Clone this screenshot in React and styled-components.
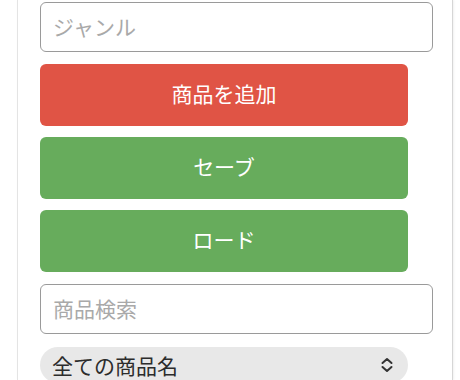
import React from "react";
import styled, { createGlobalStyle } from "styled-components";

const Global = createGlobalStyle`
  html, body { margin: 0; padding: 0; background: #ffffff; height: 380px; overflow: hidden; }
  body { font-family: "Noto Sans CJK JP", "Noto Sans", sans-serif; }
`;

const Card = styled.div`
  margin-left: 17px;
  width: 436px;
  box-sizing: border-box;
  height: 380px;
  overflow: hidden;
  padding: 2px 20px 0 22px;
  background: #fff;
  border-left: 1px solid #e4e4e4;
  border-right: 1px solid #d6d6d6;
  box-shadow: 1px 0 2px rgba(0, 0, 0, 0.06);
  display: flex;
  flex-direction: column;
  align-items: flex-start;
`;

const Field = styled.input`
  box-sizing: border-box;
  flex-shrink: 0;
  width: 393px;
  height: 50px;
  margin: 0 0 ${(p) => p.$gap}px 0;
  padding: 0 12px 3px;
  border: 1px solid #9a9a9a;
  border-radius: 6px;
  font-family: inherit;
  font-size: 21px;
  color: #333;
  outline: none;
  &::placeholder { color: #a9a9a9; }
`;

const Button = styled.button`
  box-sizing: border-box;
  flex-shrink: 0;
  width: 368px;
  height: 62px;
  margin: 0 0 ${(p) => p.$gap}px 0;
  padding: 0 0 5px;
  border: none;
  border-radius: 6px;
  background: ${(p) => p.$color};
  color: #fff;
  font-family: inherit;
  font-size: 21px;
  cursor: pointer;
`;

const SelectBox = styled.div`
  box-sizing: border-box;
  flex-shrink: 0;
  width: 368px;
  height: 36px;
  border-radius: 18px;
  background: #e8e8e8;
  display: flex;
  align-items: center;
  padding: 0 14px 0 12px;
  font-size: 21px;
  color: #2c2c2c;
`;

const SelectLabel = styled.span`
  flex: 1;
`;

const Chevrons = () => (
  <svg width="14" height="16" viewBox="0 0 14 16" fill="none" stroke="#333" strokeWidth="2" strokeLinecap="round" strokeLinejoin="round">
    <path d="M2.5 6 L7 2 L11.5 6" />
    <path d="M2.5 10 L7 14 L11.5 10" />
  </svg>
);

export default function App() {
  return (
    <>
      <Global />
      <Card>
        <Field placeholder="ジャンル" $gap={12} />
        <Button $color="#e05445" $gap={11}>商品を追加</Button>
        <Button $color="#67ac5c" $gap={11}>セーブ</Button>
        <Button $color="#67ac5c" $gap={12}>ロード</Button>
        <Field placeholder="商品検索" $gap={13} />
        <SelectBox>
          <SelectLabel>全ての商品名</SelectLabel>
          <Chevrons />
        </SelectBox>
      </Card>
    </>
  );
}
